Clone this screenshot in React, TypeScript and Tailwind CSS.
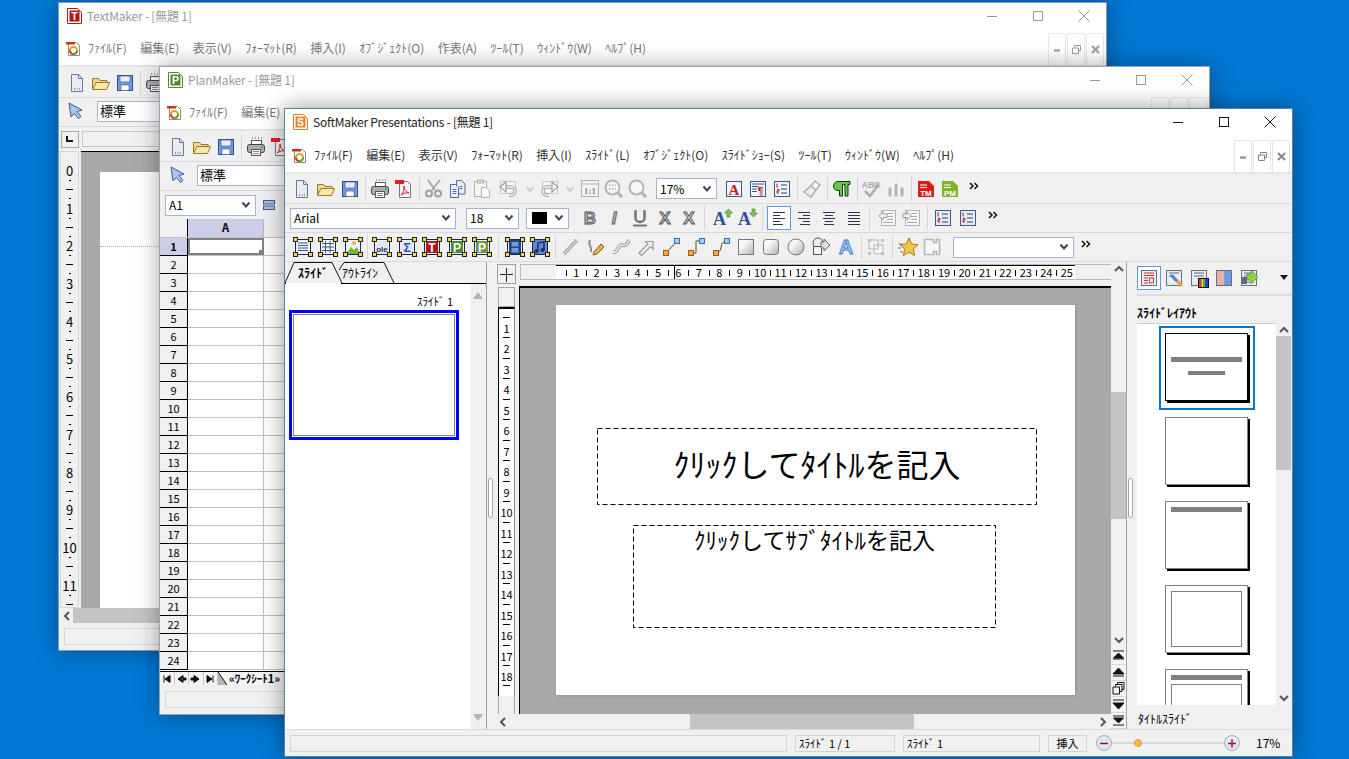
import type { ReactNode } from 'react';

function Ic({ children, w = 20, h = 20 }: { children: ReactNode; w?: number; h?: number }) {
  return (
    <svg width={w} height={h} viewBox={`0 0 ${w} ${h}`} fill="none" className="block shrink-0 overflow-visible">
      {children}
    </svg>
  );
}

// ---- window chrome icons
function Caption({ dim }: { dim?: boolean }) {
  const c = dim ? '#9a9a9a' : '#1a1a1a';
  return (
    <div className="flex -mr-[1px]">
      <div className="w-[46px] h-[26px] flex items-center justify-center">
        <Ic w={10} h={10}><path d="M0 5.500h10" stroke={c} /></Ic>
      </div>
      <div className="w-[46px] h-[26px] flex items-center justify-center">
        <Ic w={10} h={10}><rect x=".5" y=".5" width="9" height="9" stroke={c} /></Ic>
      </div>
      <div className="w-[46px] h-[26px] flex items-center justify-center">
        <Ic w={12} h={12}><path d="M.5.5l11 11M11.500.5l-11 11" stroke={c} /></Ic>
      </div>
    </div>
  );
}

function AppIcon({ letter, color, fill }: { letter: string; color: string; fill: string }) {
  return (
    <Ic w={15} h={16}>
      <path d="M.5.5h10l4 4v11H.5z" fill="#fff" stroke={color} />
      <rect x="2.500" y="2.500" width="10" height="11" fill={fill} />
      <text x="7.500" y="12" fontSize="10.500" fontWeight="700" fill="#fff" textAnchor="middle" fontFamily="Liberation Sans">{letter}</text>
    </Ic>
  );
}

function MenuDoc() {
  return (
    <Ic w={15} h={16}>
      <path d="M2.500 1.500h8l3 3v10h-11z" fill="#fff" stroke="#8a8a8a" />
      <rect x="0" y="1" width="9" height="2.500" fill="#c8341c" />
      <circle cx="7.500" cy="9.500" r="3.600" stroke="#e8a020" strokeWidth="2" />
      <path d="M4 9.500a3.600 3.600 0 0 0 3.500 3.600" stroke="#d83a20" strokeWidth="2" />
      <path d="M7.500 13a3.600 3.600 0 0 0 3.500-3.500" stroke="#58a838" strokeWidth="2" />
    </Ic>
  );
}

function Mdi({ dim }: { dim?: boolean }) {
  return (
    <div className={`flex gap-[1px] ${dim ? 'opacity-80' : ''}`}>
      <div className="w-[18px] h-[33px] border border-[#e4e4e4] rounded-[2px] flex items-center justify-center">
        <Ic w={8} h={8}><path d="M1 5.500h6" stroke="#7d8794" strokeWidth="2" /></Ic>
      </div>
      <div className="w-[18px] h-[33px] border border-[#e4e4e4] rounded-[2px] flex items-center justify-center">
        <Ic w={9} h={9}><path d="M2.500 2.500V.5h6v5h-2M.5 3h6v5.500h-6z" stroke="#7d8794" /></Ic>
      </div>
      <div className="w-[18px] h-[33px] border border-[#e4e4e4] rounded-[2px] flex items-center justify-center">
        <Ic w={9} h={9}><path d="M1 1l7 7M8 1l-7 7" stroke="#7d8794" strokeWidth="2" /></Ic>
      </div>
    </div>
  );
}

// ---- file toolbar
const NewDoc = () => (
  <Ic>
    <path d="M4.500 1.500h7l4 4v13h-11z" fill="#e6ebf5" stroke="#6a7894" />
    <path d="M11.500 1.500v4h4" stroke="#6a7894" />
    <path d="M7 16h1M9.500 16h1M12 16h1" stroke="#3a4a6a" />
  </Ic>
);
const OpenFolder = () => (
  <Ic>
    <path d="M1.500 16V5.500h6l1.500 2h7v2" fill="#f4d78a" stroke="#9a7a2a" />
    <path d="M5 9.500h13.500l-3 7h-14z" fill="#fbe7a8" stroke="#9a7a2a" />
  </Ic>
);
const SaveDisk = () => (
  <Ic>
    <rect x="2.500" y="2.500" width="15" height="15" fill="#6f9be2" stroke="#2f4f95" />
    <rect x="5" y="3" width="10" height="6" fill="#e8eefa" stroke="#2f4f95" strokeWidth=".6" />
    <rect x="6" y="12" width="8" height="5.500" fill="#fff" stroke="#2f4f95" strokeWidth=".6" />
  </Ic>
);
const Printer = () => (
  <Ic w={20}>
    <path d="M6 1h1M9 1h1M12 1h1M15 1h1" stroke="#555" />
    <rect x="5.500" y="3.500" width="10" height="4" fill="#fff" stroke="#555" />
    <rect x="1.500" y="7.500" width="17" height="8" rx="2" fill="#a9aeb3" stroke="#444" />
    <rect x="5.500" y="12.500" width="9" height="6" fill="#fff" stroke="#555" />
    <path d="M7 14.500h6M7 16.500h6" stroke="#888" />
    <rect x="15" y="9" width="2" height="2" fill="#42b04a" />
  </Ic>
);
const PdfDoc = () => (
  <Ic>
    <path d="M5.500 2.500h8l3 3v13h-11z" fill="#f2f4f9" stroke="#6a7894" />
    <rect x="1" y="1" width="9" height="4" fill="#dc2020" />
    <path d="M7 16c3-2 3-7 3-9 0 3 2 6 5 7-3-.5-5 0-8 2z" stroke="#dc2020" />
  </Ic>
);
const Cut = () => (
  <Ic>
    <path d="M8 11L16 1M11 11L4 1" stroke="#a9a9a9" strokeWidth="2" />
    <circle cx="5" cy="14.500" r="3" stroke="#a0a0a0" strokeWidth="2" />
    <circle cx="14" cy="14.500" r="3" stroke="#a0a0a0" strokeWidth="2" />
  </Ic>
);
const Copy = () => (
  <Ic>
    <path d="M8.500 1.500h5l3.500 3.500v10h-8.500z" fill="#e7ecf6" stroke="#4f6a9f" />
    <path d="M2.500 5.500h5l3 3v10h-8z" fill="#eef2fa" stroke="#4f6a9f" />
    <path d="M4.500 10.500h4M4.500 12.500h4M4.500 14.500h4M11.500 7.500h3M11.500 9.500h3" stroke="#4f6a9f" />
  </Ic>
);
const Paste = () => (
  <Ic>
    <rect x="2.500" y="2.500" width="12" height="15" fill="#f4f4f4" stroke="#b0b0b0" />
    <rect x="5.500" y="1" width="6" height="3" fill="#ddd" stroke="#b0b0b0" />
    <path d="M9.500 8.500h5l3 3v7h-8z" fill="#fafafa" stroke="#b0b0b0" />
  </Ic>
);
const Undo = ({ flip }: { flip?: boolean }) => (
  <Ic>
    <g transform={flip ? 'translate(20 0) scale(-1 1)' : undefined}>
      <rect x="2.500" y="2.500" width="15" height="12" fill="#f6f6f6" stroke="#c8c8c8" />
      <path d="M6 8h7a4 4 0 0 1 0 8h-2" stroke="#a2a2a2" strokeWidth="3.500" />
      <path d="M6 8h7a4 4 0 0 1 0 8h-2" stroke="#f6f6f6" strokeWidth="1.500" />
      <path d="M8 3L2 8l6 5z" fill="#f6f6f6" stroke="#a2a2a2" strokeWidth="1.200" />
    </g>
  </Ic>
);
const Caret = () => (
  <Ic w={10} h={8}><path d="M1.500 2l3.500 3.500L8.500 2" stroke="#cfcfcf" strokeWidth="2" /></Ic>
);
const OneOne = () => (
  <Ic w={18} h={17}>
    <rect x=".5" y=".5" width="17" height="16" fill="#f2f2f2" stroke="#b0b0b0" />
    <path d="M.5 4h17" stroke="#b0b0b0" />
    <text x="9" y="13.500" fontSize="9" fontWeight="700" fill="#8f8f8f" textAnchor="middle" fontFamily="Liberation Serif">1:1</text>
  </Ic>
);
const ZoomGlass = ({ grid }: { grid?: boolean }) => (
  <Ic>
    <circle cx="8.500" cy="8.500" r="7" fill="#f6f6f6" stroke="#b5b5b5" strokeWidth="2" />
    {grid && <path d="M5 5.500h1.500v1.500H5zM8 5.500h1.500v1.500H8zM11 5.500h1v1.500h-1zM5 9h1.500v1.500H5zM8 9h1.500v1.500H8zM11 9h1v1.500h-1z" fill="#a9a9a9" />}
    <path d="M14 14l4 4" stroke="#b0b0b0" strokeWidth="3" />
  </Ic>
);
const ABox = () => (
  <Ic>
    <rect x="2.500" y="2.500" width="15" height="15" fill="#f1f3fa" stroke="#3f5a92" />
    <text x="10" y="16" fontSize="15" fontWeight="700" fill="#c41e24" textAnchor="middle" fontFamily="Liberation Serif">A</text>
  </Ic>
);
const ParaBox = () => (
  <Ic>
    <rect x="2.500" y="2.500" width="15" height="15" fill="#f1f3fa" stroke="#3f5a92" />
    <path d="M4 5h12M4 7.500h7M4 10h5M4 12.500h5" stroke="#3f5a92" />
    <text x="12.500" y="16" fontSize="10" fontWeight="700" fill="#c41e24" textAnchor="middle" fontFamily="Liberation Sans">¶</text>
  </Ic>
);
const ListBox = ({ plain }: { plain?: boolean }) => (
  <Ic>
    <rect x="2.500" y="2.500" width="15" height="15" fill={plain ? '#e6ebf6' : '#f1f3fa'} stroke="#3f5a92" />
    <path d="M5 4.500v4M5 10.500h2v1.500H5v2h2" stroke="#a8141c" />
    <path d="M9 6h6M9 10h6M9 14h6" stroke="#2a3f70" />
  </Ic>
);
const Brush = () => (
  <Ic>
    <path d="M13 2l5 4-4 5-5-4z" fill="#f7f7f7" stroke="#b0b0b0" strokeWidth="1.500" />
    <path d="M9 7l5 4-5 7-7-5z" fill="#eee" stroke="#b0b0b0" strokeWidth="1.500" />
  </Ic>
);
const Pilcrow = () => (
  <Ic>
    <path d="M7.500 17V11.500H6a4.500 4.500 0 0 1 0-9h12v3h-2V17h-3V5.500h-2.500V17z" fill="#6cc24a" stroke="#0c3d12" />
  </Ic>
);
const Spell = () => (
  <Ic>
    <text x="9" y="8.500" fontSize="8.500" fontWeight="700" fill="#aaa" textAnchor="middle" fontFamily="Liberation Sans">ABC</text>
    <path d="M3 12l5 5 9-12" stroke="#adadad" strokeWidth="2.500" />
  </Ic>
);
const Bars = () => (
  <Ic>
    <path d="M2 8h4v10H2zM8 4h4v14H8zM14 8h4v10h-4z" fill="#b2b2b2" stroke="#f7f7f7" />
  </Ic>
);
const ColorDoc = ({ fill, label }: { fill: string; label: string }) => (
  <Ic>
    <path d="M2 2h11l5 5v11H2z" fill={fill} />
    <path d="M4 6h7M4 8.500h7" stroke="#fff" />
    <text x="10" y="17" fontSize="8" fontWeight="700" fill="#fff" textAnchor="middle" fontFamily="Liberation Sans">{label}</text>
  </Ic>
);
const More = () => (
  <Ic w={10} h={8}><path d="M1 1l3 3-3 3M5.500 1l3 3-3 3" stroke="#111" strokeWidth="1.500" /></Ic>
);

// ---- format toolbar
const Glyph = ({ t, fill = '#b8b8b8', font = 'Liberation Sans', italic }: { t: string; fill?: string; font?: string; italic?: boolean }) => (
  <Ic>
    <text x="10" y="16" fontSize="17" fontWeight="700" fontStyle={italic ? 'italic' : 'normal'} fill={fill} stroke="#555" strokeWidth=".9" textAnchor="middle" fontFamily={font}>{t}</text>
  </Ic>
);
const Under = () => (
  <Ic>
    <path d="M5.500 2v8a4.500 4 0 0 0 9 0V2" stroke="#777" strokeWidth="2.500" />
    <path d="M3 17.500h14" stroke="#777" strokeWidth="2" />
  </Ic>
);
const Grow = ({ down }: { down?: boolean }) => (
  <Ic w={22} h={20}>
    <text x="8.500" y="17" fontSize="18" fontWeight="700" fill="#2d4f98" textAnchor="middle" fontFamily="Liberation Serif">A</text>
    <path d={down ? 'M16 1h3v4h2.500l-4 4-4-4H16z' : 'M17.500 1l4 4H19v4h-3V5h-2.500z'} fill="#7ebf4e" stroke="#41832a" strokeWidth=".6" />
  </Ic>
);
const Align = ({ kind }: { kind: 'l' | 'r' | 'c' | 'j' }) => {
  const d = {
    l: 'M4 4.500h12M4 7.500h7M4 10.500h12M4 13.500h7M4 16.500h10',
    r: 'M4 4.500h12M9 7.500h7M4 10.500h12M9 13.500h7M6 16.500h10',
    c: 'M4 4.500h12M6 7.500h8M4 10.500h12M6 13.500h8M5 16.500h10',
    j: 'M4 4.500h12M4 7.500h12M4 10.500h12M4 13.500h12M4 16.500h12',
  }[kind];
  return <Ic><path d={d} stroke="#2b3350" /></Ic>;
};
const Indent = ({ flip }: { flip?: boolean }) => (
  <Ic>
    <rect x="3.500" y="2.500" width="14" height="15" fill="#f8f8f8" stroke="#b2b2b2" />
    <path d="M9 5.500h6M9 8.500h6M9 11.500h6M5 14.500h10" stroke="#aaa" />
    <path d={flip ? 'M1 6h4V3.500L9 8l-4 4V9.500H1z' : 'M9 6H5V3.500L1 8l4 4V9.500h4z'} fill="#f0f0f0" stroke="#9a9a9a" />
  </Ic>
);

// ---- object toolbar
const Framed = ({ children }: { children: ReactNode }) => (
  <Ic>
    <rect x="2.500" y="2.500" width="15" height="15" fill="#eef1f8" stroke="#1c2a4c" />
    {children}
    {[[0, 0], [15, 0], [0, 15], [15, 15]].map(([x, y]) => (
      <rect key={`${x}-${y}`} x={x + .5} y={y + .5} width="4" height="4" fill="#f7d55a" stroke="#222" />
    ))}
  </Ic>
);
const FrameLabel = ({ t, bg, fg = '#fff' }: { t: string; bg: string; fg?: string }) => (
  <Framed>
    <rect x="4" y="4" width="12" height="12" fill={bg} />
    <text x="10" y="14.500" fontSize={t.length > 1 ? 8 : 12} fontWeight="700" fill={fg} textAnchor="middle" fontFamily="Liberation Sans">{t}</text>
  </Framed>
);
const Line = () => <Ic><path d="M3 17L16 3" stroke="#a8a8a8" strokeWidth="3.500" /><path d="M3 17L16 3" stroke="#eee" /></Ic>;
const Free = () => (
  <Ic>
    <path d="M4 3c-3 5 3 7 1 12" stroke="#8f8f8f" strokeWidth="2" />
    <path d="M8 15l7-8 3 3-7 7-4 1z" fill="#f0b040" stroke="#8a5a10" />
  </Ic>
);
const Curve = () => <Ic><path d="M2 15c5 2 5-8 9-7s5 0 7-5" stroke="#9a9a9a" strokeWidth="3.500" /><path d="M2 15c5 2 5-8 9-7s5 0 7-5" stroke="#f2f2f2" strokeWidth="1.500" /></Ic>;
const Arrow = () => <Ic><path d="M3 16l9-9-2.500-2.500H17v7.500l-2.500-2.500-9 9z" fill="#f0f0f0" stroke="#9a9a9a" strokeWidth="1.200" /></Ic>;
const Conn = ({ d }: { d: string }) => (
  <Ic>
    <path d={d} stroke="#5c4a38" />
    <rect x="2.500" y="13.500" width="5" height="5" fill="#f4a64a" stroke="#a55b10" />
    <rect x="13.500" y="1.500" width="5" height="5" fill="#9fd0f5" stroke="#2f6fb0" />
  </Ic>
);
const Rect = ({ r }: { r?: number }) => (
  <Ic>
    <defs>
      <linearGradient id="shape" x1="0" y1="0" x2="1" y2="1">
        <stop offset=".35" stopColor="#f6f6f6" />
        <stop offset="1" stopColor="#b0b0b0" />
      </linearGradient>
    </defs>
    <rect x="2.500" y="2.500" width="15" height="15" rx={r} fill="url(#shape)" stroke="#777" />
  </Ic>
);
const Ellipse = () => <Ic><circle cx="10" cy="10" r="8" fill="url(#shape)" stroke="#777" /></Ic>;
const AutoShape = () => (
  <Ic>
    <circle cx="7" cy="6" r="5" fill="#eee" stroke="#555" />
    <rect x="2.500" y="9.500" width="8" height="8" fill="#f7f7f7" stroke="#555" />
    <path d="M10 5h3V2l6 6-6 6v-3h-3z" fill="#ddd" stroke="#666" />
  </Ic>
);
const WordArt = () => (
  <Ic>
    <text x="10" y="17" fontSize="20" fontWeight="700" fill="#9ec5f0" stroke="#3d78c4" strokeWidth=".8" textAnchor="middle" fontFamily="Liberation Sans">A</text>
  </Ic>
);
const Group = () => (
  <Ic>
    <path d="M3 3h9v9H3zM8 8h9v9H8z" fill="#f4f4f4" stroke="#b5b5b5" />
    <path d="M2 2h3v3H2zM15 2h3v3h-3zM2 15h3v3H2zM15 15h3v3h-3z" fill="#c2c2c2" />
  </Ic>
);
const Star = () => (
  <Ic>
    <path d="M1 7h3M0 11h3M2 15h3" stroke="#777" />
    <path d="M11 1l2.700 6 6.300.7-4.700 4.300 1.300 6.500L11 15.300 5.400 18.500l1.300-6.500L2 7.700 8.300 7z" fill="#f4c44c" stroke="#b07a10" />
  </Ic>
);
const Wrench = () => (
  <Ic>
    <path d="M2.500 2.500h9v3h3v-3h3v15h-3v-3h-3v3h-9z" fill="#f6f6f6" stroke="#b5b5b5" strokeWidth="1.500" />
  </Ic>
);
const Grid = () => (
  <Framed><path d="M4 6.500h12M4 10h12M4 13.500h12M7.500 4v12M12 4v12" stroke="#3f5a92" /></Framed>
);

// ---- pane icons
const PaneIcon = ({ kind }: { kind: number }) => (
  <Ic>
    <rect x="2.500" y="2.500" width="15" height="15" fill="#e8ecf5" stroke="#666e80" />
    {kind === 0 && <path d="M5 5h10M5 7.500h10M5 10h4M5 12.500h4M5 15h4M10.500 10h4v5h-4z" stroke="#d03030" />}
    {kind === 1 && <><path d="M5 5h10M5 8h4" stroke="#5a6a90" /><path d="M7 7l8 8" stroke="#4f7ed0" strokeWidth="3" /><path d="M13 13l5 5" stroke="#f0a830" strokeWidth="3" /></>}
    {kind === 2 && (
      <>
        <path d="M5 5h10M5 8h10" stroke="#5a6a90" />
        <rect x="9.500" y="10.500" width="10" height="9" fill="#111" stroke="#111" />
        <rect x="10" y="11" width="2.500" height="8" fill="#e33" />
        <rect x="12.500" y="11" width="2" height="8" fill="#ee3" />
        <rect x="14.500" y="11" width="2" height="8" fill="#3c3" />
        <rect x="16.500" y="11" width="2.500" height="8" fill="#33e" />
      </>
    )}
    {kind === 3 && <><rect x="3" y="3" width="7" height="14" fill="#eab0a0" /><rect x="10" y="3" width="7" height="14" fill="#6f9be2" /></>}
    {kind === 4 && <><path d="M5 5h10M5 8h10M5 14h10" stroke="#5a6a90" /><rect x="3" y="9" width="5" height="7" fill="#5a6a90" /><path d="M8 6h4V2l7 7-7 7v-4H8z" fill="#8ed04e" stroke="#4e9024" strokeWidth=".6" /></>}
  </Ic>
);

const Chevron = () => (
  <Ic w={10} h={8}><path d="M1.500 1.500L5 5.500l3.500-4" stroke="#444" strokeWidth="2" /></Ic>
);
const ArrowUp = () => <Ic w={10} h={7}><path d="M1 6l4-4 4 4" stroke="#555" strokeWidth="2" /></Ic>;
const ArrowDown = () => <Ic w={10} h={7}><path d="M1 1l4 4 4-4" stroke="#555" strokeWidth="2" /></Ic>;
const ArrowLeft = () => <Ic w={7} h={10}><path d="M6 1L2 5l4 4" stroke="#555" strokeWidth="2" /></Ic>;
const ArrowRight = () => <Ic w={7} h={10}><path d="M1 1l4 4-4 4" stroke="#555" strokeWidth="2" /></Ic>;
const ArrowTool = () => (
  <Ic>
    <path d="M3 2l13 7-5 1.500 4 5-2.500 2-4-5L5 16z" fill="#a8c4f0" stroke="#3f5a92" />
  </Ic>
);

function Slot({ children, className = 'w-[24px]' }: { children?: ReactNode; className?: string }) {
  return <div className={`${className} h-[24px] flex items-center justify-center shrink-0`}>{children}</div>;
}
function Sep({ className = 'w-[6px]' }: { className?: string }) {
  return (
    <div className={`${className} h-[24px] flex justify-center shrink-0`}>
      <div className="w-px h-full bg-[#d4d4d4]" />
    </div>
  );
}
function Combo({ className, children }: { className: string; children?: ReactNode }) {
  return (
    <div className={`${className} h-[21px] bg-white border border-[#a4b5d3] flex items-center justify-between pl-[3px] pr-[4px] text-[12px] text-black shrink-0`}>
      <span className="flex items-center">{children}</span>
      <Chevron />
    </div>
  );
}
function DashBox({ w, h, className, children }: { w: number; h: number; className: string; children: ReactNode }) {
  return (
    <div className={`${className} relative flex justify-center text-black shrink-0`}>
      <svg width={w} height={h} className="absolute left-0 top-0">
        <rect x=".5" y=".5" width={w - 1} height={h - 1} fill="none" stroke="#000" strokeDasharray="5 3" />
      </svg>
      {children}
    </div>
  );
}

const menuItems = ['ﾌｧｲﾙ(F)', '編集(E)', '表示(V)', 'ﾌｫｰﾏｯﾄ(R)', '挿入(I)', 'ｽﾗｲﾄﾞ(L)', 'ｵﾌﾞｼﾞｪｸﾄ(O)', 'ｽﾗｲﾄﾞｼｮｰ(S)', 'ﾂｰﾙ(T)', 'ｳｨﾝﾄﾞｳ(W)', 'ﾍﾙﾌﾟ(H)'];
const tmMenuItems = ['ﾌｧｲﾙ(F)', '編集(E)', '表示(V)', 'ﾌｫｰﾏｯﾄ(R)', '挿入(I)', 'ｵﾌﾞｼﾞｪｸﾄ(O)', '作表(A)', 'ﾂｰﾙ(T)', 'ｳｨﾝﾄﾞｳ(W)', 'ﾍﾙﾌﾟ(H)'];
const hNums = Array.from({ length: 25 }, (_, i) => i + 1);
const vNums = Array.from({ length: 18 }, (_, i) => i + 1);

function Presentations() {
  return (
    <div className="absolute left-[284px] top-[108px] w-[1009px] h-[649px] bg-white border border-[#5f7f9c] flex flex-col shadow-[0_0_22px_rgba(0,0,0,0.4)]">
      <div className="h-[31px] pb-[5px] flex items-center justify-between shrink-0">
        <div className="flex items-center pl-[8px] gap-[5px] text-[12px] text-[#222]">
          <AppIcon letter="S" color="#e8792a" fill="#ee8030" />
          <span className="tracking-[-0.25px]">SoftMaker Presentations - [無題 1]</span>
        </div>
        <Caption />
      </div>

      <div className="h-[32px] flex items-center justify-between shrink-0 pr-[2px]">
        <div className="flex items-center pl-[7px]">
          <MenuDoc />
          <div className="flex items-center gap-[13.400px] ml-[7px] pb-[3px] text-[12px] text-[#333]">
            {menuItems.map((m) => <span key={m}>{m}</span>)}
          </div>
        </div>
        <Mdi />
      </div>

      <div className="h-[32px] bg-[#f0f0f0] border-t-2 border-b border-t-[#e4e4e4] border-b-[#d8d8d8] flex items-center pl-[5px] shrink-0">
        <Slot><NewDoc /></Slot>
        <Slot><OpenFolder /></Slot>
        <Slot><SaveDisk /></Slot>
        <Sep />
        <Slot><Printer /></Slot>
        <Slot><PdfDoc /></Slot>
        <Sep />
        <Slot><Cut /></Slot>
        <Slot><Copy /></Slot>
        <Slot><Paste /></Slot>
        <Slot className="w-[28px]"><Undo /></Slot>
        <Slot className="w-[16px]"><Caret /></Slot>
        <Slot><Undo flip /></Slot>
        <Slot className="w-[16px]"><Caret /></Slot>
        <Slot><OneOne /></Slot>
        <Slot><ZoomGlass grid /></Slot>
        <Slot><ZoomGlass /></Slot>
        <Combo className="w-[61px] ml-[6px] mr-[5px]">17%</Combo>
        <Slot><ABox /></Slot>
        <Slot><ParaBox /></Slot>
        <Slot><ListBox /></Slot>
        <Sep />
        <Slot><Brush /></Slot>
        <Sep />
        <Slot><Pilcrow /></Slot>
        <Sep />
        <Slot><Spell /></Slot>
        <Slot><Bars /></Slot>
        <Sep />
        <Slot><ColorDoc fill="#d81e1e" label="TM" /></Slot>
        <Slot><ColorDoc fill="#7fb52a" label="PM" /></Slot>
        <Slot className="w-[24px] -mt-[6px]"><More /></Slot>
      </div>

      <div className="h-[29px] bg-[#f0f0f0] border-b border-[#d8d8d8] flex items-center pl-[5px] shrink-0">
        <Combo className="w-[166px]">Arial</Combo>
        <Combo className="w-[53px] ml-[10px]">18</Combo>
        <Combo className="w-[43px] ml-[7px]"><span className="w-[15px] h-[12px] bg-black ml-[2px]" /></Combo>
        <Slot className="w-[24px] ml-[9px]"><Glyph t="B" /></Slot>
        <Slot><Glyph t="I" italic /></Slot>
        <Slot className="w-[27px]"><Under /></Slot>
        <Slot><Glyph t="X" /></Slot>
        <Slot><Glyph t="X" fill="#ccc" /></Slot>
        <Sep />
        <Slot className="w-[25px] ml-[2px]"><Grow /></Slot>
        <Slot className="w-[25px]"><Grow down /></Slot>
        <Sep />
        <div className="w-[24px] h-[24px] ml-[2px] border border-[#5a9ae0] bg-white flex items-center justify-center shrink-0"><Align kind="l" /></div>
        <Slot className="w-[25px]"><Align kind="r" /></Slot>
        <Slot className="w-[25px]"><Align kind="c" /></Slot>
        <Slot className="w-[25px]"><Align kind="j" /></Slot>
        <Sep />
        <Slot className="w-[24px] ml-[4px]"><Indent /></Slot>
        <Slot><Indent flip /></Slot>
        <Sep />
        <Slot className="w-[25px]"><ListBox plain /></Slot>
        <Slot className="w-[25px]"><ListBox plain /></Slot>
        <Slot className="w-[25px] -mt-[6px]"><More /></Slot>
      </div>

      <div className="h-[29px] bg-[#f0f0f0] border-b border-[#d8d8d8] flex items-center pl-[5px] shrink-0">
        <Slot className="w-[25px]"><Framed><path d="M5 6h10M5 8.500h10M5 11h10M5 13.500h10" stroke="#3f5a92" /></Framed></Slot>
        <Slot className="w-[25px]"><Grid /></Slot>
        <Slot className="w-[25px]"><Framed><path d="M3 17l5-7 3 3 3-3 3 7z" fill="#6fb83c" /><circle cx="11" cy="6" r="2" fill="#f0b040" /></Framed></Slot>
        <Sep className="w-[4px]" />
        <Slot className="w-[25px]"><FrameLabel t="ole" bg="#e2e7f3" fg="#24345c" /></Slot>
        <Slot className="w-[25px]"><FrameLabel t="Σ" bg="#dfe6f5" fg="#2a55b0" /></Slot>
        <Slot className="w-[25px]"><FrameLabel t="T" bg="#b01818" /></Slot>
        <Slot className="w-[25px]"><FrameLabel t="P" bg="#4a8a2c" /></Slot>
        <Slot className="w-[25px]"><FrameLabel t="P" bg="#6a9a40" /></Slot>
        <Sep className="w-[8px]" />
        <Slot className="w-[25px]"><Framed><rect x="4" y="3" width="12" height="14" fill="#23427f" /><rect x="6.500" y="5" width="7" height="4.500" fill="#6d9be0" /><rect x="6.500" y="11" width="7" height="4.500" fill="#6d9be0" /></Framed></Slot>
        <Slot className="w-[25px]"><Framed><rect x="3" y="3" width="14" height="14" fill="#5f87d8" /><path d="M8 14V6l6-1v8" stroke="#1f2f60" strokeWidth="1.500" /><circle cx="6.500" cy="14" r="2" fill="#1f2f60" /><circle cx="12.500" cy="13" r="2" fill="#1f2f60" /></Framed></Slot>
        <Sep />
        <Slot className="w-[25px]"><Line /></Slot>
        <Slot className="w-[25px]"><Free /></Slot>
        <Slot className="w-[25px]"><Curve /></Slot>
        <Slot className="w-[25px]"><Arrow /></Slot>
        <Slot className="w-[25px]"><Conn d="M5 16L16 4" /></Slot>
        <Slot className="w-[25px]"><Conn d="M5 16h5V4h6" /></Slot>
        <Slot className="w-[25px]"><Conn d="M5 16c8 0 2-12 11-12" /></Slot>
        <Slot className="w-[25px]"><Rect /></Slot>
        <Slot className="w-[25px]"><Rect r={3} /></Slot>
        <Slot className="w-[25px]"><Ellipse /></Slot>
        <Slot className="w-[25px]"><AutoShape /></Slot>
        <Slot className="w-[25px]"><WordArt /></Slot>
        <Sep />
        <Slot className="w-[24px]"><Group /></Slot>
        <Sep className="w-[8px]" />
        <Slot className="w-[24px]"><Star /></Slot>
        <Slot className="w-[24px]"><Wrench /></Slot>
        <Combo className="w-[121px] ml-[9px]" />
        <Slot className="w-[24px] -mt-[6px]"><More /></Slot>
      </div>

      <div className="flex-1 flex min-h-0 bg-[#f0f0f0]">
        {/* left slide pane */}
        <div className="w-[202px] border-r border-[#a6a6a6] flex flex-col shrink-0">
          <div className="h-[22px] relative border-b border-black shrink-0">
            <svg width="115" height="23" className="absolute left-0 top-0">
              <path d="M54 8L59 .5h40l10 20.500" stroke="#111" fill="none" />
              <path d="M0 21L9 .5h38l10 20.500" stroke="#111" fill="#f0f0f0" />
              <rect x="1" y="21" width="55" height="1" fill="#fff" />
            </svg>
            <span className="absolute left-[13px] top-[2px] text-[12px] font-bold text-black">ｽﾗｲﾄﾞ</span>
            <span className="absolute left-[57px] top-[2px] text-[12px] text-black">ｱｳﾄﾗｲﾝ</span>
          </div>
          <div className="flex-1 flex min-h-0">
            <div className="w-[185px] bg-white pl-[4px] pt-[10px] flex flex-col">
              <span className="text-[11px] leading-[15px] text-black w-[164px] text-right">ｽﾗｲﾄﾞ 1</span>
              <div className="w-[170px] h-[130px] border-[3px] border-[#0000ff] p-[1px] mt-[1px] bg-white flex">
                <div className="flex-1 border border-[#808080]" />
              </div>
            </div>
            <div className="w-[16px] flex flex-col items-center justify-between py-[8px]">
              <Ic w={10} h={7}><path d="M5 0l5 7H0z" fill="#b4b4b4" /></Ic>
              <Ic w={10} h={7}><path d="M5 7L0 0h10z" fill="#b4b4b4" /></Ic>
            </div>
          </div>
        </div>

        <div className="w-[10px] shrink-0 flex items-center pl-[1px]">
          <div className="w-[5px] h-[40px] border border-[#a8a8a8] rounded-[2px] bg-white mt-[5px]" />
        </div>

        {/* centre: rulers + canvas */}
        <div className="w-[614px] flex flex-col shrink-0">
          <div className="h-[24px] flex shrink-0">
            <div className="w-[19px] h-[20px] mt-[2px] border border-[#a0a0a0] flex items-center justify-center">
              <Ic w={15} h={15}><path d="M7.500 1v14M1 7.500h13" stroke="#222" /></Ic>
            </div>
            <div className="w-[591px] h-[16px] mt-[2px] ml-[4px] flex border-y border-l border-[#b8b8b8]">
              <div className="w-[35px] shrink-0" />
              <div className="w-[519px] relative bg-white border-t border-black flex items-center pl-[7.800px] text-[11px] leading-none text-black shrink-0">
                {hNums.map((n) => (
                  <div key={n} className="flex items-center shrink-0">
                    <div className="w-[4.440px] flex justify-center"><div className="w-px h-[6px] bg-black" /></div>
                    <span className="w-[16px] text-center">{n}</span>
                  </div>
                ))}
                <div className="absolute left-[118px] top-0 w-px h-full bg-black" />
              </div>
            </div>
          </div>
          <div className="flex-1 flex min-h-0">
            <div className="w-[22px] shrink-0 pl-[1px] flex flex-col">
              <div className="w-[17px] h-[20px] mt-[1px] border border-[#a8a8a8] shrink-0" />
              <div className="w-[17px] h-[389px] bg-white border-l border-black border-t-2 border-t-black border-r border-r-[#888] flex flex-col items-center text-[11px] leading-none text-black shrink-0 pt-[8px]">
                <div className="w-[7px] h-px bg-black shrink-0" />
                {vNums.map((n) => (
                  <div key={n} className="h-[20.470px] flex flex-col items-center justify-between shrink-0 pt-[5px]">
                    <span>{n}</span>
                    <div className="w-[7px] h-px bg-black shrink-0" />
                  </div>
                ))}
              </div>
              <div className="w-[17px] flex-1 border-x border-[#a8a8a8]" />
            </div>
            <div className="flex-1 bg-[#a9a9a9] border-l border-t-2 border-black pl-[36px] pt-[17px] overflow-hidden">
              <div className="w-[519px] h-[390px] bg-white shadow-[1px_1px_3px_rgba(0,0,0,0.15)] flex flex-col">
                <DashBox w={440} h={77} className="ml-[41px] mt-[123px] w-[440px] h-[77px] items-center pb-[8px] text-[32px] leading-none">
                  ｸﾘｯｸしてﾀｲﾄﾙを記入
                </DashBox>
                <DashBox w={363} h={103} className="ml-[77px] mt-[20px] w-[363px] h-[103px] text-[23px] leading-[28px]">
                  ｸﾘｯｸしてｻﾌﾞﾀｲﾄﾙを記入
                </DashBox>
              </div>
            </div>
          </div>
          <div className="h-[15px] flex items-center shrink-0">
            <div className="w-[193px] pl-[1px] flex justify-start shrink-0"><span className="ml-[1px]"><ArrowLeft /></span></div>
            <div className="w-[224px] h-full bg-[#c4c4c4] shrink-0" />
            <div className="flex-1 flex justify-end pr-[4px]"><ArrowRight /></div>
          </div>
        </div>

        {/* vertical scrollbar + page nav */}
        <div className="w-[16px] border-r border-[#a6a6a6] flex flex-col items-center shrink-0">
          <div className="h-[130px] w-full flex justify-center pt-[3px] shrink-0"><ArrowUp /></div>
          <div className="h-[127px] w-full bg-[#c4c4c4] shrink-0" />
          <div className="flex-1 w-full flex justify-center items-end pb-[5px]"><ArrowDown /></div>
          <div className="w-[15px] flex flex-col shrink-0">
            {[
              'M2 2h11M7.500 4l5 5h-10zM2 10h11',
              'M7.500 3l5.500 6H2zM2 11h11',
              '',
              'M2 3h11M7.500 12L2 6h11z',
              'M7.500 10l-5-5h10zM2 3h11M2 12h11',
            ].map((d, i) => (
              <div key={i} className="h-[16px] border-b border-[#d8d8d8] flex items-center justify-center bg-[#f4f4f4]">
                <Ic w={15} h={15}>
                  {d ? <path d={d} fill="#111" stroke="#111" /> : <path d="M6.500 3.500V1.500h6.500v7h-2.500M4.500 5.500V3.500h6.500v7h-2M2 6h6.500v7H2z" stroke="#111" fill="#f4f4f4" />}
                </Ic>
              </div>
            ))}
          </div>
        </div>

        {/* right pane */}
        <div className="flex-1 flex min-w-0">
          <div className="w-[10px] shrink-0 flex items-center pl-[1px]">
            <div className="w-[5px] h-[40px] border border-[#a8a8a8] rounded-[2px] bg-white mt-[5px]" />
          </div>
          <div className="flex-1 flex flex-col min-w-0">
            <div className="h-[34px] border-b-2 border-[#dcdcdc] flex items-center shrink-0">
              <div className="w-[24px] h-[24px] border border-[#5a9ae0] bg-white flex items-center justify-center shrink-0"><PaneIcon kind={0} /></div>
              <Slot className="w-[25px]"><PaneIcon kind={1} /></Slot>
              <Slot className="w-[25px]"><PaneIcon kind={2} /></Slot>
              <Slot className="w-[25px]"><PaneIcon kind={3} /></Slot>
              <Slot className="w-[25px]"><PaneIcon kind={4} /></Slot>
              <div className="ml-[18px]"><Ic w={10} h={6}><path d="M1 0h8L5 5z" fill="#111" /></Ic></div>
            </div>
            <div className="h-[27px] text-[12px] font-bold leading-[33px] text-black shrink-0">ｽﾗｲﾄﾞﾚｲｱｳﾄ</div>
            <div className="h-[382px] flex shrink-0">
              <div className="w-[139px] bg-white border-t border-[#cfcfcf] overflow-hidden flex flex-col items-center pt-[9px] gap-[16px]">
                <div className="w-[96px] h-[84px] -mt-[7px] -mb-[9px] border-2 border-[#0078d7] pt-[5px] flex justify-center shrink-0">
                  <div className="w-[83px] h-[68px] border border-black bg-white shadow-[2px_2px_0_#000] flex flex-col items-center pt-[23px]">
                    <div className="w-[71px] h-[5px] bg-[#808080]" />
                    <div className="w-[37px] h-[4px] bg-[#808080] mt-[9px]" />
                  </div>
                </div>
                <div className="w-[83px] h-[68px] border border-[#808080] bg-white shadow-[2px_2px_0_#000] shrink-0" />
                <div className="w-[83px] h-[68px] border border-[#808080] bg-white shadow-[2px_2px_0_#000] px-[5px] pt-[5px] shrink-0">
                  <div className="h-[5px] bg-[#808080]" />
                </div>
                <div className="w-[83px] h-[68px] border border-[#808080] bg-white shadow-[2px_2px_0_#000] p-[5px] shrink-0">
                  <div className="h-full border border-[#808080]" />
                </div>
                <div className="w-[83px] h-[68px] border border-[#808080] bg-white shadow-[2px_2px_0_#000] p-[5px] flex flex-col gap-[4px] shrink-0">
                  <div className="h-[5px] bg-[#808080] shrink-0" />
                  <div className="flex-1 border border-[#808080]" />
                </div>
              </div>
              <div className="w-[15px] flex flex-col items-center">
                <div className="h-[13px] flex items-center"><ArrowUp /></div>
                <div className="w-full h-[134px] bg-[#c4c4c4]" />
                <div className="flex-1 flex items-end pb-[3px]"><ArrowDown /></div>
              </div>
            </div>
            <div className="flex-1 text-[12px] leading-[28px] text-black pl-[1px]">ﾀｲﾄﾙｽﾗｲﾄﾞ</div>
          </div>
        </div>
      </div>

      {/* status bar */}
      <div className="h-[27px] bg-[#f0f0f0] border-t border-[#d8d8d8] flex items-center pl-[5px] text-[11px] text-black shrink-0">
        <div className="w-[497px] h-[17px] border border-[#d4d4d4] shrink-0" />
        <div className="w-[100px] h-[17px] ml-[8px] border border-[#d4d4d4] px-[3px] leading-[15px] shrink-0">ｽﾗｲﾄﾞ 1 / 1</div>
        <div className="w-[137px] h-[17px] ml-[8px] border border-[#d4d4d4] px-[3px] leading-[15px] shrink-0">ｽﾗｲﾄﾞ 1</div>
        <div className="w-[39px] h-[17px] ml-[8px] border border-[#d4d4d4] text-center leading-[15px] shrink-0">挿入</div>
        <div className="ml-[9px] flex items-center shrink-0">
          <Ic w={16} h={16}><circle cx="8" cy="8" r="7.500" fill="#dfe6f5" stroke="#9fb0cc" /><path d="M4 8.500h8" stroke="#a01818" strokeWidth="1.500" /></Ic>
          <div className="w-[112px] h-[2px] bg-[#d8d8d8] relative">
            <div className="absolute left-[22px] -top-[3px] w-[8px] h-[8px] rounded-full bg-[#f3bd4c] border border-[#d99a20]" />
          </div>
          <Ic w={16} h={16}><circle cx="8" cy="8" r="7.500" fill="#dfe6f5" stroke="#9fb0cc" /><path d="M4 8.500h8M8 4.500v8" stroke="#a01818" strokeWidth="1.500" /></Ic>
        </div>
        <span className="ml-[16px] text-[12px]">17%</span>
      </div>
    </div>
  );
}

function PlanMaker() {
  const rows = Array.from({ length: 24 }, (_, i) => i + 1);
  return (
    <div className="absolute left-[159px] top-[66px] w-[1051px] h-[649px] bg-white border border-[#9ca3aa] flex flex-col shadow-[0_0_22px_rgba(0,0,0,0.35)]">
      <div className="h-[30px] pb-[4px] flex items-center justify-between shrink-0">
        <div className="flex items-center pl-[8px] gap-[5px] text-[12px] text-[#9a9a9a]">
          <AppIcon letter="P" color="#4f8a2e" fill="#4f8a2e" />
          <span className="tracking-[-0.2px]">PlanMaker - [無題 1]</span>
        </div>
        <Caption dim />
      </div>
      <div className="h-[32px] flex items-center justify-between pr-[2px] shrink-0">
        <div className="flex items-center pl-[7px]">
          <MenuDoc />
          <div className="flex gap-[13.400px] ml-[7px] pb-[2px] text-[12px] text-[#777]">
            <span>ﾌｧｲﾙ(F)</span>
            <span>編集(E)</span>
          </div>
        </div>
        <Mdi dim />
      </div>
      <div className="h-[33px] pt-[2px] bg-[#f0f0f0] border-t-2 border-b border-t-[#e4e4e4] border-b-[#d8d8d8] flex items-center pl-[6px] shrink-0">
        <Slot><NewDoc /></Slot>
        <Slot><OpenFolder /></Slot>
        <Slot><SaveDisk /></Slot>
        <Sep />
        <Slot><Printer /></Slot>
        <Slot><PdfDoc /></Slot>
      </div>
      <div className="h-[29px] pb-[2px] bg-[#f0f0f0] border-b border-[#d8d8d8] flex items-center pl-[6px] shrink-0">
        <Slot><ArrowTool /></Slot>
        <div className="w-[200px] h-[21px] ml-[7px] bg-white border border-[#a4b5d3] text-[13px] leading-[17px] text-black pl-[2px] shrink-0">標準</div>
      </div>
      <div className="h-[28px] bg-[#f0f0f0] flex items-center pl-[5px] shrink-0">
        <Combo className="w-[91px]">A1</Combo>
        <div className="ml-[6px]">
          <Ic w={14} h={12}><rect x="1.500" y="1.500" width="11" height="3.500" fill="#a9c0e6" stroke="#3f5a92" /><rect x="1.500" y="7" width="11" height="3.500" fill="#a9c0e6" stroke="#3f5a92" /></Ic>
        </div>
      </div>
      <div className="flex-1 min-h-0 bg-white overflow-hidden flex flex-col">
        <div className="h-[19px] flex bg-[#f0f0f0] border-b border-[#c0c0c0] shrink-0">
          <div className="w-[28px] border-r border-black shrink-0" />
          <div className="w-[76px] bg-[#cccde8] border-r border-[#b8b8b8] text-[11px] font-bold text-center leading-[16px] text-black shrink-0">A</div>
          <div className="flex-1" />
        </div>
        {rows.map((r) => (
          <div key={r} className="h-[18px] flex border-b border-[#c0c0c0] shrink-0">
            <div className={`w-[28px] h-[18px] border-r border-b border-black text-[11px] text-center leading-[17px] text-black shrink-0 ${r === 1 ? 'bg-[#cccde8] font-bold' : 'bg-[#f0f0f0]'}`}>{r}</div>
            {r === 1 ? (
              <div className="w-[76px] border-2 border-[#808080] relative shrink-0">
                <div className="absolute -right-[2px] -bottom-[2px] w-[5px] h-[5px] bg-[#808080]" />
              </div>
            ) : (
              <div className="w-[76px] border-r border-[#c0c0c0] shrink-0" />
            )}
            <div className="flex-1" />
          </div>
        ))}
      </div>
      <div className="h-[14px] flex items-center bg-[#f4f4f4] border-t border-black shrink-0">
        <div className="w-[58px] h-full flex items-center shrink-0">
          {['M2 1.500v7M8 1.500L3 5l5 3.500z', 'M7 1.500L2 5l5 3.500zM5 4h5v2H5z', 'M3 1.500L8 5 3 8.500zM0 4h5v2H0z', 'M8 1.500v7M2 1.500L7 5 2 8.500z'].map((d) => (
            <div key={d} className="flex-1 h-full border-r border-[#c8c8c8] flex items-center justify-center">
              <Ic w={10} h={10}><path d={d} fill="#111" stroke="#111" /></Ic>
            </div>
          ))}
        </div>
        <svg width="9" height="13" className="shrink-0"><path d="M0 0l9 13H0z" fill="#b4b4b4" /><path d="M0 0l9 13" stroke="#111" /></svg>
        <div className="text-[11px] font-bold text-black pl-[2px]">«ﾜｰｸｼｰﾄ1»</div>
      </div>
      <div className="h-[29px] bg-[#f0f0f0] flex items-center pl-[5px] shrink-0">
        <div className="w-[880px] h-[17px] border border-[#d4d4d4]" />
      </div>
    </div>
  );
}

function TextMaker() {
  const nums = Array.from({ length: 12 }, (_, i) => i);
  return (
    <div className="absolute left-[58px] top-[2px] w-[1049px] h-[649px] bg-white border border-[#8a9aa8] flex flex-col shadow-[0_0_22px_rgba(0,0,0,0.35)]">
      <div className="h-[30px] pb-[4px] flex items-center justify-between shrink-0">
        <div className="flex items-center pl-[8px] gap-[5px] text-[12px] text-[#9a9a9a]">
          <AppIcon letter="T" color="#b01818" fill="#b01818" />
          <span className="tracking-[-0.2px]">TextMaker - [無題 1]</span>
        </div>
        <Caption dim />
      </div>
      <div className="h-[32px] flex items-center justify-between pr-[2px] shrink-0">
        <div className="flex items-center pl-[7px]">
          <MenuDoc />
          <div className="flex items-center gap-[13.400px] ml-[7px] pb-[2px] text-[12px] text-[#777]">
            {tmMenuItems.map((m) => <span key={m}>{m}</span>)}
          </div>
        </div>
        <Mdi dim />
      </div>
      <div className="h-[33px] pt-[2px] bg-[#f0f0f0] border-t-2 border-b border-t-[#e4e4e4] border-b-[#d8d8d8] flex items-center pl-[6px] shrink-0">
        <Slot><NewDoc /></Slot>
        <Slot><OpenFolder /></Slot>
        <Slot><SaveDisk /></Slot>
        <Sep />
        <Slot><Printer /></Slot>
      </div>
      <div className="h-[29px] pb-[2px] bg-[#f0f0f0] border-b border-[#d8d8d8] flex items-center pl-[5px] shrink-0">
        <Slot><ArrowTool /></Slot>
        <div className="w-[200px] h-[21px] ml-[9px] bg-white border border-[#a4b5d3] text-[13px] leading-[17px] text-black pl-[2px] shrink-0">標準</div>
      </div>
      <div className="h-[24px] bg-[#f0f0f0] flex items-center pl-[2px] shrink-0">
        <div className="w-[18px] h-[17px] border border-[#a8a8a8] flex items-center justify-center">
          <Ic w={8} h={8}><path d="M1 1v5h6" stroke="#111" strokeWidth="2" /></Ic>
        </div>
        <div className="w-[300px] h-[16px] ml-[3px] border border-[#c8c8c8]" />
      </div>
      <div className="flex-1 min-h-0 flex overflow-hidden">
        <div className="w-[22px] bg-[#f0f0f0] pl-[1px] shrink-0">
          <div className="w-[19px] h-full border border-[#d4d4d4] flex flex-col items-center pt-[12px] text-[13px] leading-none text-black overflow-hidden">
            {nums.map((n) => (
              <div key={n} className="h-[37.700px] flex flex-col items-center shrink-0">
                <span className="h-[15px]">{n}</span>
                <span className="w-[2px] h-px bg-black mt-[1px]" />
                <span className="w-[7px] h-px bg-black mt-[8px]" />
                <span className="w-[2px] h-px bg-black mt-[8px]" />
              </div>
            ))}
          </div>
        </div>
        <div className="flex-1 bg-[#a9a9a9] border-t border-black pl-[19px] pt-[20px] overflow-hidden">
          <div className="w-full h-full bg-white pt-[74px]">
            <div className="border-t border-dotted border-[#aaa]" />
          </div>
        </div>
      </div>
      <div className="h-[15px] bg-[#c4c4c4] flex items-center shrink-0">
        <div className="w-[14px] h-full bg-[#f0f0f0] flex items-center justify-center"><ArrowLeft /></div>
      </div>
      <div className="h-[27px] bg-[#f0f0f0] flex items-center pl-[5px] shrink-0">
        <div className="w-[800px] h-[17px] border border-[#d4d4d4]" />
      </div>
    </div>
  );
}

export default function App() {
  return (
    <div className="relative w-[1349px] h-[759px] overflow-hidden bg-[#0078d4] font-['Noto_Sans_CJK_JP','Noto_Sans',sans-serif]">
      <TextMaker />
      <PlanMaker />
      <Presentations />
    </div>
  );
}
